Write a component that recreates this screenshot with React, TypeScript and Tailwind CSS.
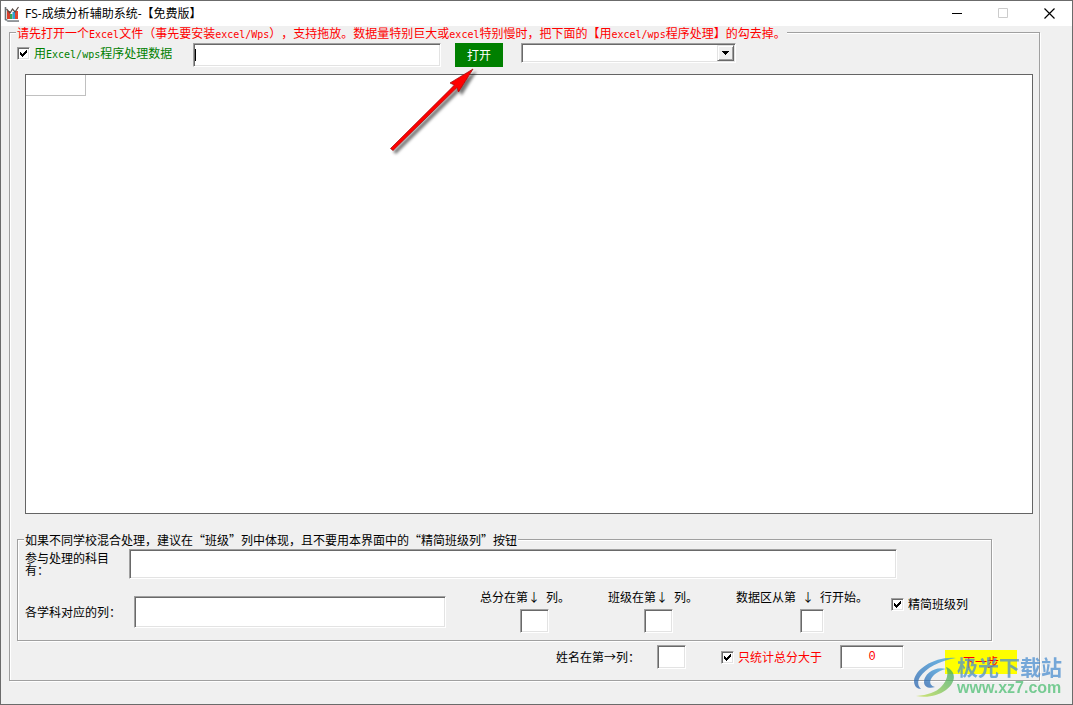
import type { ReactNode } from "react";
import clsx from "clsx";

const SUNKEN =
  "border border-t-[#a0a0a0] border-l-[#a0a0a0] border-r-white border-b-white bg-white shadow-[inset_1px_1px_0_#696969,inset_-1px_-1px_0_#e3e3e3] outline-none";

const GROUP =
  "min-w-0 border border-[#a0a0a0] shadow-[1px_1px_0_#fff,inset_1px_1px_0_#fff]";

// Latin text takes half the width of a Chinese character
const Half = ({ children }: { children: ReactNode }) => (
  <span className="whitespace-pre font-['DejaVu_Sans_Mono',monospace] text-[10px] leading-[0]">{children}</span>
);

const Check = ({ id, className, children }: { id: string; className?: string; children: ReactNode }) => (
  <div className={clsx("flex items-center gap-1 whitespace-nowrap", className)}>
    <div className="relative size-[13px]">
      <input id={id} type="checkbox" defaultChecked className={clsx(SUNKEN, "block size-[13px] appearance-none")} />
      <svg viewBox="0 0 13 13" className="pointer-events-none absolute inset-0 size-[13px]" shapeRendering="crispEdges">
        <path fill="#000" d="M3 5h1v3H3zM4 6h1v3H4zM5 7h1v3H5zM6 6h1v3H6zM7 5h1v3H7zM8 4h1v3H8zM9 3h1v3H9z" />
      </svg>
    </div>
    <label htmlFor={id}>{children}</label>
  </div>
);

const ColumnField = ({
  id,
  className,
  inputClass,
  children,
}: {
  id: string;
  className: string;
  inputClass: string;
  children: ReactNode;
}) => (
  <div className={clsx("flex flex-col gap-[5px] whitespace-nowrap", className)}>
    <label htmlFor={id} className="leading-[14px]">
      {children}
    </label>
    <input id={id} type="text" className={clsx(SUNKEN, "h-6", inputClass)} />
  </div>
);

const AppIcon = () => (
  <svg viewBox="0 0 16 16" className="size-4">
    <path d="M1.5 1v12.5L4 15h11" fill="none" stroke="#6d7377" strokeWidth="1.6" />
    <path d="M2 14.5h13" stroke="#9aa0a4" />
    <path d="M3 5h3v8H3z" fill="#d8402c" />
    <path d="M6 8h2.5v5H6z" fill="#3aa655" />
    <path d="M8.500 6H11v7H8.500z" fill="#2d9fd4" />
    <path d="M11 5h3v8h-3z" fill="#e0452d" />
    <path d="M2.500 3 6 7l2.500-4L11 6l3.500-5" fill="none" stroke="#5b4a44" strokeWidth="1.200" />
  </svg>
);

const TitleBar = () => (
  <header className="flex h-[25px] shrink-0 items-center bg-white pl-[3px]">
    <AppIcon />
    <h1 className="ml-[5px] flex-1 font-['Open_Sans','Noto_Sans_CJK_SC',sans-serif] text-xs">FS-成绩分析辅助系统-【免费版】</h1>
    <button type="button" aria-label="最小化" className="flex h-full w-[46px] items-center justify-center">
      <svg viewBox="0 0 11 11" className="size-[11px]">
        <path d="M0 5.500h10" stroke="#000" />
      </svg>
    </button>
    <button type="button" aria-label="最大化" disabled className="flex h-full w-[46px] items-center justify-center">
      <svg viewBox="0 0 11 11" className="size-[11px]">
        <path d="M.5.500h9v9h-9z" fill="none" stroke="#ccc" />
      </svg>
    </button>
    <button type="button" aria-label="关闭" className="flex h-full w-[46px] items-center justify-center">
      <svg viewBox="0 0 11 11" className="size-[11px]">
        <path d="m.5.500 10 10m0-10-10 10" stroke="#000" strokeWidth="1.200" />
      </svg>
    </button>
  </header>
);

const Arrow = () => (
  <svg viewBox="0 0 96 96" className="pointer-events-none absolute top-[63px] left-[383px] size-24">
    <defs>
      <filter id="arrow-shadow" x="-20%" y="-20%" width="150%" height="150%">
        <feDropShadow dx="3" dy="3" stdDeviation="1.500" floodColor="#000" floodOpacity="0.550" />
      </filter>
    </defs>
    <path
      d="M6.500 84.500 70.500 21l-4.500-2L89 5 74.500 28 73 23.500 9 86.500Z"
      fill="#f00"
      stroke="#a01010"
      strokeWidth="0.800"
      filter="url(#arrow-shadow)"
    />
  </svg>
);

const Watermark = () => (
  <div className="pointer-events-none absolute right-2.5 bottom-[5px] flex items-center opacity-75">
    <svg viewBox="0 0 44 42" className="h-[42px] w-11">
      <defs>
        <linearGradient id="swirl-blue" x1="1" y1="0" x2="0" y2="1">
          <stop offset="0" stopColor="#3fa6e4" />
          <stop offset="1" stopColor="#2a62ac" />
        </linearGradient>
        <linearGradient id="swirl-green" x1="1" y1="0" x2="0" y2="1">
          <stop offset="0" stopColor="#2fa56a" />
          <stop offset="1" stopColor="#c6e04a" />
        </linearGradient>
      </defs>
      <path d="M43 2C22 0 2 13 1 25c0 5 3 8 7 8-3-3-4-7-1-12C13 12 26 5 43 2Z" fill="url(#swirl-blue)" />
      <path d="M33 13c-11-3-22 5-22 13 0 5 5 7 11 5-4-1-6-4-4-8 2-4 7-8 15-10Z" fill="url(#swirl-blue)" />
      <path d="M33 11c11 4 10 16 0 23-8 6-19 8-30 6 12-1 20-4 25-9 6-6 8-13 5-20Z" fill="url(#swirl-green)" />
    </svg>
    <div className="whitespace-nowrap">
      <p className="font-['Noto_Sans_CJK_SC',sans-serif] text-[21px] leading-[22px] font-bold text-[#4d8fd0]">极光下载站</p>
      <p className="font-['Liberation_Sans',sans-serif] text-base leading-[22px] font-bold text-[#4fbf74]">www.xz7.com</p>
    </div>
  </div>
);

const FileRow = () => (
  <div className="flex items-start pt-1 pr-1.5 pb-[7px] pl-[7px]">
    <Check id="use-excel" className="h-5 w-[176px] text-[#008000]">
      用<Half>Excel/wps</Half>程序处理数据
    </Check>
    <div className="relative">
      <input type="text" aria-label="文件" className={clsx(SUNKEN, "block h-6 w-[248px] px-1")} />
      <span className="absolute top-1.5 left-0.5 h-3 w-px bg-black" />
    </div>
    <button type="button" className="ml-[14px] h-6 w-12 bg-[#008000] text-white">
      打开
    </button>
    <div className="relative ml-[18px]">
      <select aria-label="工作表" className={clsx(SUNKEN, "block h-5 w-[215px] appearance-none")} />
      <span className="pointer-events-none absolute top-0.5 right-0.5 flex h-4 w-[17px] items-center justify-center border border-t-[#e3e3e3] border-l-[#e3e3e3] border-r-[#696969] border-b-[#696969] bg-[#f0f0f0] shadow-[inset_1px_1px_0_#fff,inset_-1px_-1px_0_#a0a0a0]">
        <svg viewBox="0 0 7 4" className="h-1 w-[7px]" shapeRendering="crispEdges">
          <path d="M0 0h7v1H0zM1 1h5v1H1zM2 2h3v1H2zM3 3h1v1H3z" />
        </svg>
      </span>
    </div>
  </div>
);

const SubjectGroup = () => (
  <fieldset className={clsx(GROUP, "mt-[19px] mr-[47px] ml-[7px] pb-[7px] pl-[7px]")}>
    <legend className="-ml-px bg-[#f0f0f0] px-px leading-[13px]">
      如果不同学校混合处理，建议在“班级”列中体现，且不要用本界面中的“精简班级列”按钮
    </legend>
    <div className="flex items-center pt-[3px] pr-[94px]">
      <label htmlFor="subjects" className="w-[104px] pr-4 leading-3">
        参与处理的科目有：
      </label>
      <input id="subjects" type="text" className={clsx(SUNKEN, "h-[30px] min-w-0 flex-1 px-1")} />
    </div>
    <div className="mt-[11px] flex items-center">
      <label htmlFor="subject-columns" className="w-[109px]">
        各学科对应的列：
      </label>
      <input id="subject-columns" type="text" className={clsx(SUNKEN, "mr-[34px] h-8 w-[312px] px-1")} />
      <ColumnField id="total-column" className="w-32" inputClass="ml-10 w-[29px]">
        总分在第↓<Half> </Half>列。
      </ColumnField>
      <ColumnField id="class-column" className="w-32" inputClass="ml-9 w-[29px]">
        班级在第↓<Half> </Half>列。
      </ColumnField>
      <ColumnField id="first-row" className="w-[155px]" inputClass="ml-16 w-6">
        数据区从第<Half> </Half>↓<Half> </Half>行开始。
      </ColumnField>
      <Check id="trim-class" className="h-7 self-start">
        精简班级列
      </Check>
    </div>
  </fieldset>
);

const BottomRow = () => (
  <div className="flex h-[39px] justify-end pt-1 pr-[22px] pb-1.5">
    <div className="flex h-6 w-[130px] items-center justify-between">
      <label htmlFor="name-column">姓名在第→列：</label>
      <input id="name-column" type="text" className={clsx(SUNKEN, "h-6 w-[29px]")} />
    </div>
    <div className="ml-[35px] flex h-6 w-[183px] items-center justify-between text-[#f00]">
      <Check id="min-total">只统计总分大于</Check>
      <input
        type="text"
        aria-label="总分下限"
        defaultValue="0"
        className={clsx(SUNKEN, "h-6 w-16 text-center font-['Liberation_Mono',monospace]")}
      />
    </div>
    <button type="button" className="ml-[41px] h-6 w-[72px] self-end bg-[#ff0] text-[#f00]">
      下一步
    </button>
  </div>
);

export default function App() {
  return (
    <div
      lang="zh-CN"
      className="relative flex min-h-screen flex-col border border-[#6b6b6b] bg-[#f0f0f0] font-['Noto_Sans_CJK_SC',sans-serif] text-xs text-black [text-spacing-trim:space-all]"
    >
      <TitleBar />
      <fieldset className={clsx(GROUP, "mr-8 mb-[23px] ml-2")}>
        <legend className="ml-[6px] bg-[#f0f0f0] px-px leading-[13px] text-[#f00]">
          请先打开一个<Half>Excel</Half>文件（事先要安装<Half>excel/Wps</Half>），支持拖放。数据量特别巨大或
          <Half>excel</Half>特别慢时，把下面的【用<Half>excel/wps</Half>程序处理】的勾去掉。
        </legend>
        <FileRow />
        {/* Data grid, takes whatever height the controls leave */}
        <div className="mr-1.5 ml-[15px] h-[calc(100vh-265px)] min-h-40 border border-[#646464] bg-white">
          <table className="border-collapse">
            <tbody>
              <tr>
                <td className="h-5 w-[59px] border-r border-b border-[#c0c0c0] p-0" />
              </tr>
            </tbody>
          </table>
        </div>
        <SubjectGroup />
        <BottomRow />
      </fieldset>
      <Arrow />
      <Watermark />
    </div>
  );
}
